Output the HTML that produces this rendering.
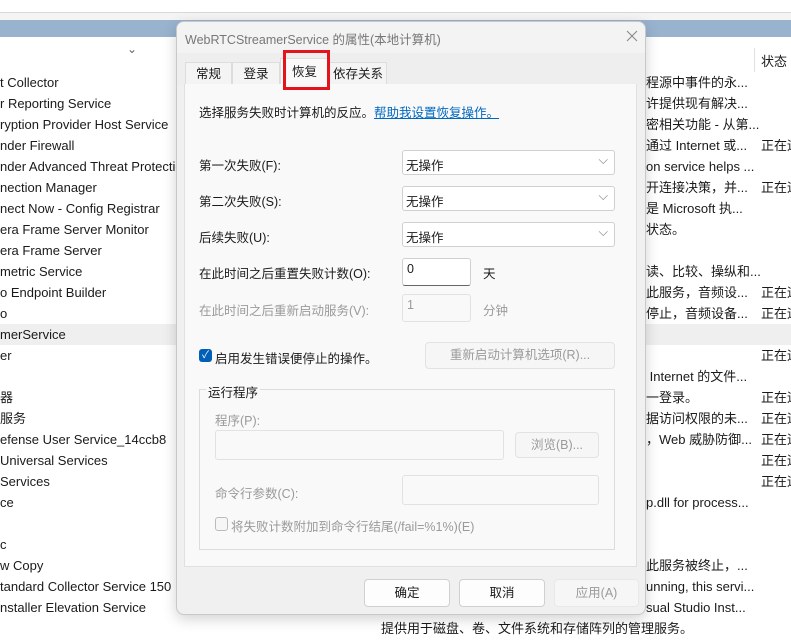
<!DOCTYPE html>
<html><head><meta charset="utf-8"><style>
*{margin:0;padding:0;box-sizing:border-box}
body{width:791px;height:641px;overflow:hidden;background:#fff;font-family:"Liberation Sans","Noto Sans CJK SC",sans-serif;font-size:13px;color:#1a1a1a;position:relative}
.a{position:absolute;white-space:nowrap}
.row{position:absolute;left:0;width:791px;height:21px;line-height:21px;white-space:nowrap;overflow:hidden}
.row span{white-space:nowrap}
.l{position:absolute;left:0}
.r{position:absolute;left:646px}
.s{position:absolute;left:761px}
.d{font-size:12.5px}
.box{position:absolute;background:#fff;border:1px solid #d0d0d0;border-radius:3px;font-size:12.5px}
.dis{color:#9a9a9a}
.btn{position:absolute;border:1px solid #d0d0d0;border-radius:4px;background:#fdfdfd;text-align:center;line-height:25px;font-size:12.5px}
</style></head><body>
<div class="a" style="left:0;top:12px;width:791px;height:1px;background:#d8d8d8"></div>
<div class="a" style="left:0;top:13px;width:791px;height:7px;background:#f4f4f4"></div>
<div class="a" style="left:0;top:20px;width:791px;height:17px;background:#99b3cf"></div>
<div class="a" style="left:127px;top:42px;color:#666;font-size:12px">⌄</div>
<div class="a" style="left:754px;top:48px;width:1px;height:24px;background:#e0e0e0"></div>
<div class="a" style="left:761px;top:51px">状态</div>

<div class="row" style="top:72px"><span class="l">t Collector</span><span class="r">程源中事件的永...</span></div>
<div class="row" style="top:93px"><span class="l">r Reporting Service</span><span class="r">许提供现有解决...</span></div>
<div class="row" style="top:114px"><span class="l">ryption Provider Host Service</span><span class="r">密相关功能 - 从第...</span></div>
<div class="row" style="top:135px"><span class="l">nder Firewall</span><span class="r">通过 Internet 或...</span><span class="s">正在运行</span></div>
<div class="row" style="top:156px"><span class="l">nder Advanced Threat Protection</span><span class="r">on service helps ...</span></div>
<div class="row" style="top:177px"><span class="l">nection Manager</span><span class="r">开连接决策，并...</span><span class="s">正在运行</span></div>
<div class="row" style="top:198px"><span class="l">nect Now - Config Registrar</span><span class="r">是 Microsoft 执...</span></div>
<div class="row" style="top:219px"><span class="l">era Frame Server Monitor</span><span class="r">状态。</span></div>
<div class="row" style="top:240px"><span class="l">era Frame Server</span></div>
<div class="row" style="top:261px"><span class="l">metric Service</span><span class="r">读、比较、操纵和...</span></div>
<div class="row" style="top:282px"><span class="l">o Endpoint Builder</span><span class="r">此服务，音频设...</span><span class="s">正在运行</span></div>
<div class="row" style="top:303px"><span class="l">o</span><span class="r">停止，音频设备...</span><span class="s">正在运行</span></div>
<div class="row" style="top:324px;background:#efefef"><span class="l">merService</span></div>
<div class="row" style="top:345px"><span class="l">er</span><span class="s">正在运行</span></div>
<div class="row" style="top:366px"><span class="r">&nbsp;Internet 的文件...</span></div>
<div class="row" style="top:387px"><span class="l">器</span><span class="r">一登录。</span><span class="s">正在运行</span></div>
<div class="row" style="top:408px"><span class="l">服务</span><span class="r">据访问权限的未...</span><span class="s">正在运行</span></div>
<div class="row" style="top:429px"><span class="l">efense User Service_14ccb8</span><span class="r">，Web 威胁防御...</span><span class="s">正在运行</span></div>
<div class="row" style="top:450px"><span class="l">Universal Services</span><span class="s">正在运行</span></div>
<div class="row" style="top:471px"><span class="l">Services</span><span class="s">正在运行</span></div>
<div class="row" style="top:492px"><span class="l">ce</span><span class="r">p.dll for process...</span></div>
<div class="row" style="top:534px"><span class="l">c</span></div>
<div class="row" style="top:555px"><span class="l">w Copy</span><span class="r">此服务被终止，...</span></div>
<div class="row" style="top:576px"><span class="l">tandard Collector Service 150</span><span class="r">unning, this servi...</span></div>
<div class="row" style="top:597px"><span class="l">nstaller Elevation Service</span><span class="r">sual Studio Inst...</span></div>
<div class="a" style="left:381px;top:618px;line-height:21px">提供用于磁盘、卷、文件系统和存储阵列的管理服务。</div>

<!-- dialog -->
<div class="a" style="left:176px;top:21px;width:470px;height:594px;background:#f0f0f0;border:1px solid #c8c8c8;border-radius:8px;box-shadow:0 4px 14px rgba(0,0,0,.18);overflow:hidden">
 <div class="a" style="left:0;top:0;width:470px;height:31px;background:#f3f3f3"></div>
 <div class="a d" style="left:8px;top:7px;color:#777">WebRTCStreamerService 的属性(本地计算机)</div>
 <svg class="a" style="left:449px;top:8px" width="12" height="12"><path d="M1 1L11 11M11 1L1 11" stroke="#888" stroke-width="1.1"/></svg>
 <div class="a" style="left:0;top:31px;width:470px;height:32px;background:#eeeeee"></div>
</div>
<!-- tabs -->
<div class="a d" style="left:185px;top:62px;width:47px;height:23px;border:1px solid #ddd;border-bottom:none;background:#f4f4f4;text-align:center;line-height:22px">常规</div>
<div class="a d" style="left:232px;top:62px;width:48px;height:23px;border:1px solid #ddd;border-bottom:none;background:#f4f4f4;text-align:center;line-height:22px">登录</div>
<div class="a d" style="left:280px;top:58px;width:49px;height:27px;background:#f9f9f9;border:1px solid #ddd;border-bottom:none;text-align:center;line-height:26px">恢复</div>
<div class="a d" style="left:329px;top:62px;width:58px;height:23px;border:1px solid #ddd;border-bottom:none;background:#f4f4f4;text-align:center;line-height:22px">依存关系</div>
<div class="a" style="left:184px;top:84px;width:453px;height:483px;background:#f9f9f9;border:1px solid #e0e0e0;border-top:none"></div>
<div class="a" style="left:283px;top:50px;width:47px;height:40px;border:3px solid #e3141c"></div>

<div class="a d" style="left:199px;top:102px">选择服务失败时计算机的反应。<span style="color:#0067c0;text-decoration:underline">帮助我设置恢复操作。</span></div>
<div class="a d" style="left:199px;top:155px">第一次失败(F):</div>
<div class="a d" style="left:199px;top:191px">第二次失败(S):</div>
<div class="a d" style="left:199px;top:227px">后续失败(U):</div>
<div class="box" style="left:402px;top:150px;width:213px;height:25px;padding:4px 3px">无操作<span style="position:absolute;right:6px;top:2px;color:#777">⌵</span></div>
<div class="box" style="left:402px;top:186px;width:213px;height:25px;padding:4px 3px">无操作<span style="position:absolute;right:6px;top:2px;color:#777">⌵</span></div>
<div class="box" style="left:402px;top:222px;width:213px;height:25px;padding:4px 3px">无操作<span style="position:absolute;right:6px;top:2px;color:#777">⌵</span></div>
<div class="a d" style="left:199px;top:263px">在此时间之后重置失败计数(O):</div>
<div class="box" style="left:402px;top:258px;width:69px;height:28px;padding:3px 4px;border-bottom:1px solid #666">0</div>
<div class="a d" style="left:483px;top:263px">天</div>
<div class="a dis d" style="left:199px;top:300px">在此时间之后重新启动服务(V):</div>
<div class="box dis" style="left:402px;top:294px;width:69px;height:28px;padding:3px 4px;background:#f9f9f9;border-color:#e2e2e2">1</div>
<div class="a dis d" style="left:483px;top:300px">分钟</div>
<div class="a" style="left:199px;top:349px;width:13px;height:13px;background:#005fb8;border-radius:3px;color:#fff;font-size:10px;line-height:13px;text-align:center">✓</div>
<div class="a d" style="left:215px;top:348px">启用发生错误便停止的操作。</div>
<div class="btn dis" style="left:425px;top:342px;width:190px;height:27px;background:#f6f6f6;border-color:#e2e2e2">重新启动计算机选项(R)...</div>
<div class="a" style="left:199px;top:389px;width:416px;height:161px;border:1px solid #dcdcdc"></div>
<div class="a d" style="left:206px;top:382px;background:#f9f9f9;padding:0 2px">运行程序</div>
<div class="a dis d" style="left:215px;top:410px">程序(P):</div>
<div class="box" style="left:215px;top:430px;width:289px;height:30px;background:#f9f9f9;border-color:#e2e2e2"></div>
<div class="btn dis" style="left:515px;top:432px;width:84px;height:26px;background:#f6f6f6;border-color:#e2e2e2">浏览(B)...</div>
<div class="a dis d" style="left:215px;top:483px">命令行参数(C):</div>
<div class="box" style="left:402px;top:475px;width:197px;height:30px;background:#f9f9f9;border-color:#e2e2e2"></div>
<div class="a" style="left:215px;top:517px;width:13px;height:14px;border:1px solid #bbb;border-radius:3px;background:#f6f6f6"></div>
<div class="a dis d" style="left:231px;top:516px">将失败计数附加到命令行结尾(/fail=%1%)(E)</div>
<div class="btn" style="left:364px;top:579px;width:86px;height:28px;line-height:26px">确定</div>
<div class="btn" style="left:459px;top:579px;width:86px;height:28px;line-height:26px">取消</div>
<div class="btn dis" style="left:554px;top:579px;width:85px;height:28px;line-height:26px;background:#f6f6f6;border-color:#e8e8e8">应用(A)</div>
</body></html>
